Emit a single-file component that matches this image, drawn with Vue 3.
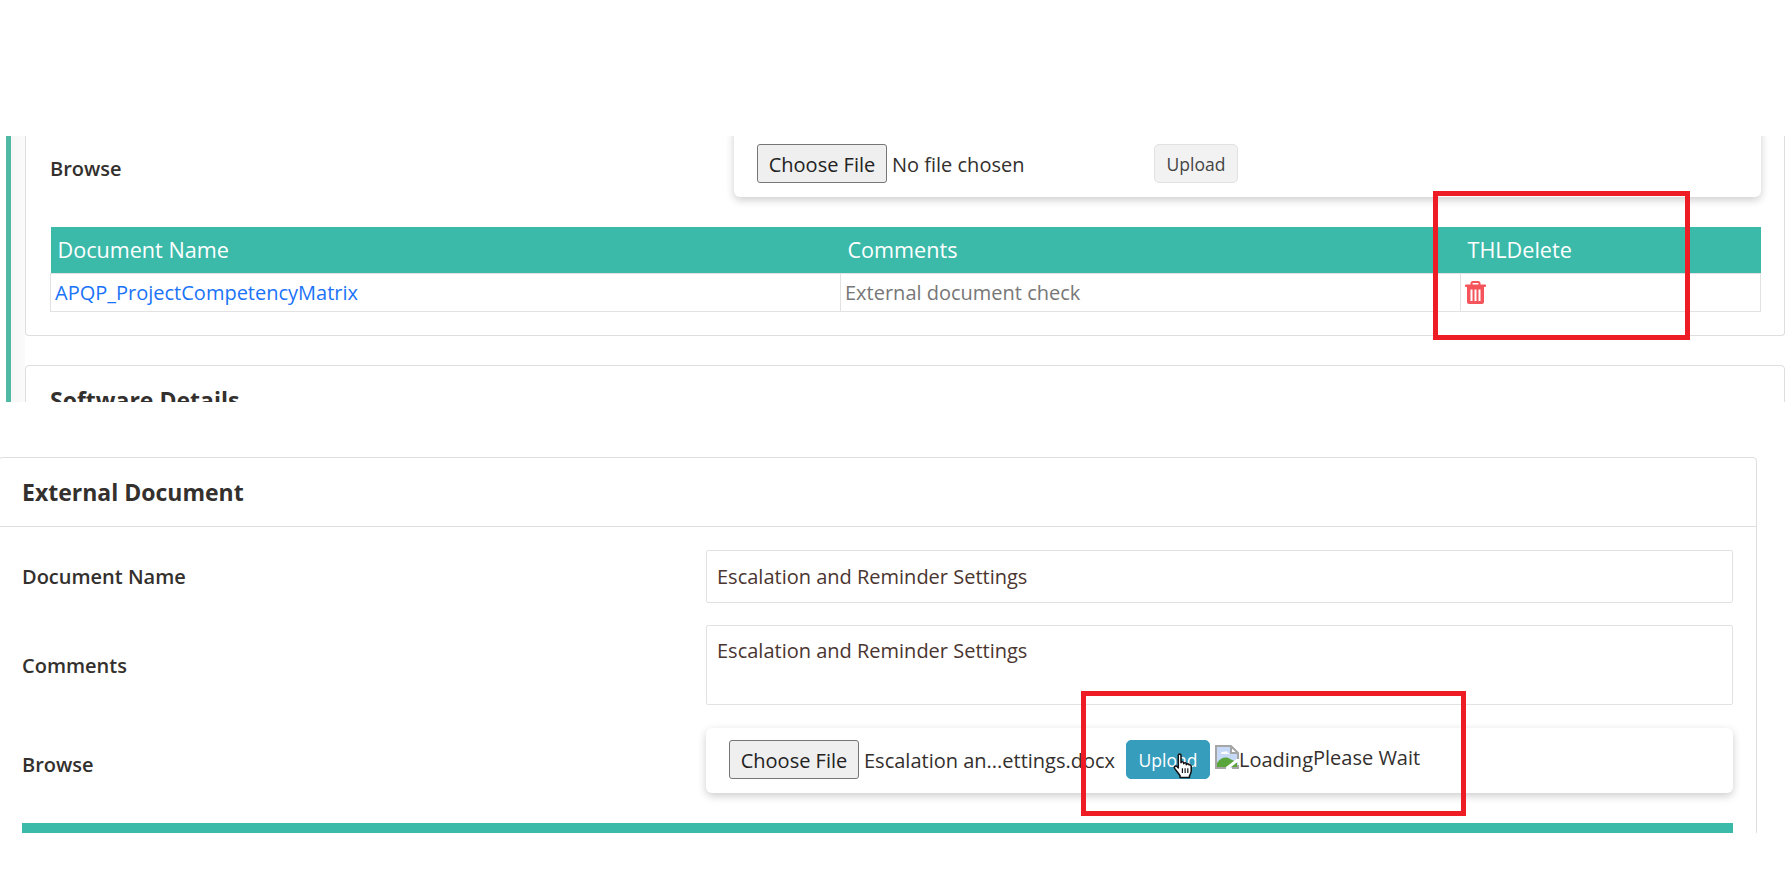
<script setup>
const rows = [{ name: 'APQP_ProjectCompetencyMatrix', comment: 'External document check' }]
</script>

<template>
  <div class="page">
    <section class="clip-top">
      <div class="card card-upper">
        <div class="row browse-top">
          <label class="lbl">Browse</label>
          <div class="filebox filebox-top">
            <button class="choose">Choose File</button>
            <span class="fname">No file chosen</span>
            <button class="upload">Upload</button>
          </div>
        </div>
        <table class="docs">
          <thead>
            <tr><th class="c1">Document Name</th><th class="c2">Comments</th><th class="c3">THLDelete</th></tr>
          </thead>
          <tbody>
            <tr v-for="r in rows" :key="r.name">
              <td><a class="link">{{ r.name }}</a></td>
              <td class="muted">{{ r.comment }}</td>
              <td>
                <svg class="trash" viewBox="0 0 21 23" width="21" height="23">
                  <path fill="none" stroke="#f5545a" stroke-width="2" d="M6.500 4V2.500C6.500 1.500 7.200 1 8 1h5c.8 0 1.500.5 1.500 1.500V4"/>
                  <rect x="0" y="3.500" width="21" height="2.600" rx="1" fill="#f5545a"/>
                  <path fill="#f5545a" d="M2 6h17v15c0 1.100-.9 2-2 2H4c-1.100 0-2-.9-2-2z"/>
                  <rect x="5.500" y="8.500" width="2" height="11.500" fill="#fff"/>
                  <rect x="9.500" y="8.500" width="2" height="11.500" fill="#fff"/>
                  <rect x="13.500" y="8.500" width="2" height="11.500" fill="#fff"/>
                </svg>
              </td>
            </tr>
          </tbody>
        </table>
      </div>
      <div class="card card-next">
        <h3 class="soft">Software Details</h3>
      </div>
      <div class="redbox red-a"></div>
    </section>

    <section class="clip-bottom">
      <div class="card card-ext">
        <h3 class="ext-head">External Document</h3>
        <div class="ext-body">
          <div class="row row-name">
            <label class="lbl">Document Name</label>
            <div class="field field-input">Escalation and Reminder Settings</div>
          </div>
          <div class="row row-comments">
            <label class="lbl">Comments</label>
            <div class="field field-area">Escalation and Reminder Settings</div>
          </div>
          <div class="row row-browse">
            <label class="lbl">Browse</label>
            <div class="filebox filebox-bottom">
              <button class="choose">Choose File</button>
              <span class="fname">Escalation an...ettings.docx</span>
              <button class="upload active">Upload</button>
              <svg class="broken" viewBox="0 0 24 24" width="24" height="24">
                <path fill="#c6daf8" d="M1 1h15l7 7v15H1z"/>
                <path fill="#fff" d="M6 9c0-1.500 1.500-2.500 3-2 1.200-1.500 3.500-1 4 1 1 0 1.500.5 1.300 1z"/>
                <path fill="#5aa53c" d="M2 22v-4c3-5 9-7 13-4l7 3v5z"/>
                <path fill="none" stroke="#fff" stroke-width="3" d="M11 24l13-10"/>
                <path fill="#fff" d="M16 1v7h7z"/>
                <path fill="none" stroke="#a6a6a6" stroke-width="2" d="M11 23H1V1h15l7 7v6M16 1v7h7M17 23h6v-3"/>
              </svg>
              <span class="loading">Loading</span>
              <span class="wait">Please Wait</span>
              <svg class="cursor" viewBox="0 0 17 22" width="20" height="26">
                <path fill="#fff" stroke="#111" stroke-width="1.300" stroke-linejoin="round" d="M4.500 1.800c0-1.300 2.300-1.300 2.300 0v6.500c0-1.300 2.300-1.300 2.300 0v.8c0-1.200 2.200-1.200 2.200 0v.8c0-1.100 2.200-1.100 2.200.1 .9-.2 2 .3 2 1.500v3.500c0 1.800-.7 3-1.500 4.500v1.300H6v-1.500c-1-1.600-3-4-4.600-6.300-.9-1.500 1-2.800 2.300-1.400l.8 1z"/>
                <path fill="none" stroke="#111" stroke-width="1" d="M8 13v4M10.300 13v4M12.600 13v4"/>
              </svg>
            </div>
          </div>
          <div class="teal-bar"></div>
        </div>
      </div>
      <div class="redbox red-b"></div>
    </section>
  </div>
</template>

<style>
html, body { margin: 0; background: #fff; }
</style>

<style scoped>
.page {
  width: 1792px;
  height: 876px;
  overflow: hidden;
  padding-top: 136px;
  box-sizing: border-box;
  font-family: "Open Sans", "Noto Sans", sans-serif;
  font-size: 20px;
  color: #33302e;
  background: #fff;
}
.clip-top {
  position: relative;
  height: 266px;
  margin-left: 6px;
  padding-left: 14px;
  border-left: 5px solid #4fb9a4;
  width: 1779px;
  box-sizing: border-box;
  overflow: hidden;
  background: linear-gradient(90deg, #f6f6f6, #fbfbfb 14px, #fff 14px);
}
.clip-bottom {
  position: relative;
  height: 376px;
  margin-top: 55px;
  overflow: hidden;
}
.card {
  background: #fff;
  border: 1px solid #dedede;
  border-radius: 4px;
  box-sizing: border-box;
}
.card-upper {
  width: 1760px;
  height: 210px;
  margin-top: -10px;
  padding: 0 23px 0 24px;
  border-top: none;
}
.card-next {
  width: 1760px;
  height: 120px;
  margin-top: 29px;
  padding: 19px 24px;
}
.soft {
  margin: 0;
  font-size: 23px;
  font-weight: 700;
  line-height: 31px;
}
.row {
  display: flex;
  align-items: center;
}
.browse-top {
  align-items: flex-start;
  height: 101px;
}
.browse-top .lbl {
  margin-top: 29px;
}
.lbl {
  width: 684px;
  font-weight: 600;
  font-size: 20px;
  line-height: 27px;
  flex: none;
}
.filebox {
  background: #fff;
  border-radius: 6px;
  box-shadow: 0 3px 8px rgba(0, 0, 0, 0.2);
  display: flex;
  align-items: flex-start;
  box-sizing: border-box;
  position: relative;
  width: 1027px;
  flex: none;
}
.filebox-top {
  height: 71px;
  padding: 18px 23px 0;
}
.filebox-bottom {
  height: 65px;
  padding: 12px 23px 0;
}
.choose {
  width: 130px;
  height: 39px;
  flex: none;
  padding: 2px 0 0;
  font: inherit;
  color: #222;
  background: #efefef;
  border: 1px solid #767676;
  border-radius: 3px;
}
.fname {
  width: 262px;
  margin-left: 5px;
  line-height: 41px;
  white-space: nowrap;
  flex: none;
}
.upload {
  width: 84px;
  height: 39px;
  flex: none;
  padding: 0;
  font: inherit;
  font-size: 17.5px;
  color: #444;
  background: #f2f2f2;
  border: 1px solid #e2e2e2;
  border-radius: 5px;
}
.upload.active {
  background: #379dbd;
  border-color: #379dbd;
  color: #fff;
}
.docs {
  width: 1711px;
  border-collapse: collapse;
  table-layout: fixed;
}
.docs th {
  background: #3bbaaa;
  color: #fff;
  font-weight: 400;
  font-size: 21.6px;
  text-align: left;
  height: 46px;
  padding: 0 7px;
  box-sizing: border-box;
}
.docs th.c1 { width: 790px; }
.docs th.c2 { width: 620px; }
.docs td {
  height: 38px;
  padding: 0 4px;
  border: 1px solid #e2e2e2;
  box-sizing: border-box;
  vertical-align: middle;
}
.link { color: #1a73f8; }
.muted { color: #777; }
.trash { display: block; }
.redbox {
  position: absolute;
  box-sizing: border-box;
  border: 5px solid #ee1c25;
  pointer-events: none;
}
.red-a {
  left: 1422px;
  top: 55px;
  width: 257px;
  height: 149px;
}
.red-b {
  left: 1081px;
  top: 234px;
  width: 385px;
  height: 125px;
}
.card-ext {
  width: 1759px;
  height: 400px;
  margin-left: -2px;
}
.ext-head {
  margin: 0;
  height: 69px;
  line-height: 68px;
  padding-left: 23px;
  font-size: 23px;
  font-weight: 700;
  border-bottom: 1px solid #dedede;
  box-sizing: border-box;
}
.ext-body {
  padding: 23px 23px 0;
}
.row-name { height: 53px; }
.row-comments { height: 80px; margin-top: 22px; }
.row-browse { height: 65px; margin-top: 23px; }
.field {
  width: 1027px;
  flex: none;
  border: 1px solid #e2e2e2;
  border-radius: 2px;
  box-sizing: border-box;
  padding: 0 10px;
  color: #4a3530;
  height: 100%;
}
.field-input { line-height: 51px; }
.field-area { line-height: 27px; padding-top: 11px; }
.row-browse .lbl { margin-top: 8px; }
.broken { margin: 5px 0 0 5px; flex: none; }
.loading { margin: 6px 0 0 0; flex: none; line-height: 27px; }
.wait { flex: none; margin-top: 4px; line-height: 27px; }
.cursor {
  position: absolute;
  left: 467px;
  top: 25px;
}
.teal-bar {
  height: 12px;
  margin-top: 30px;
  background: #3bbaaa;
}
</style>
